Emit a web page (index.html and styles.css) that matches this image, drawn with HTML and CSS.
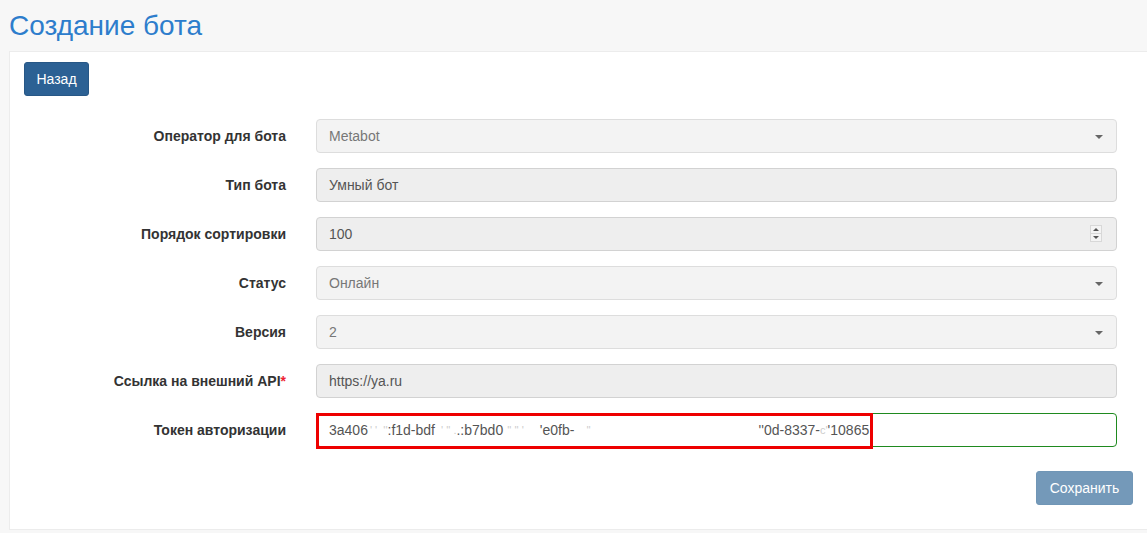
FILE: index.html
```html
<!DOCTYPE html>
<html lang="ru">
<head>
<meta charset="utf-8">
<title>Создание бота</title>
<link rel="stylesheet" href="styles.css">
</head>
<body>
<h1 class="title">Создание бота</h1>
<div class="panel">
  <div class="top"><button class="btn btn-back">Назад</button></div>
  <form class="form">
    <div class="row">
      <label class="label">Оператор для бота</label>
      <div class="field select">Metabot<span class="caret"></span></div>
    </div>
    <div class="row">
      <label class="label">Тип бота</label>
      <div class="field readonly">Умный бот</div>
    </div>
    <div class="row">
      <label class="label">Порядок сортировки</label>
      <div class="field readonly">100<span class="spin"><span class="up"></span><span class="down"></span></span></div>
    </div>
    <div class="row">
      <label class="label">Статус</label>
      <div class="field select">Онлайн<span class="caret"></span></div>
    </div>
    <div class="row">
      <label class="label">Версия</label>
      <div class="field select">2<span class="caret"></span></div>
    </div>
    <div class="row">
      <label class="label">Ссылка на внешний API<span class="req">*</span></label>
      <div class="field readonly">https://ya.ru</div>
    </div>
    <div class="row">
      <label class="label">Токен авторизации</label>
      <div class="field token">
        <span class="t">3a406</span><span class="f s1">' '  ''</span><span class="t g1">:f1d-bdf</span><span class="f s2">' '' .</span><span class="t g2">.:b7bd0</span><span class="f s3">'' '' '</span><span class="t g3">'e0fb-</span><span class="f s4">''</span><span class="t g4">''0d-8337-</span><span class="f s5">c'</span><span class="t g5">'10865</span>
        <span class="redact"></span>
      </div>
    </div>
    <div class="actions"><button type="button" class="btn btn-save">Сохранить</button></div>
  </form>
</div>
</body>
</html>
```
FILE: styles.css
```css
html, body {
  margin: 0;
  padding: 0;
  background: #f7f7f7;
  font-family: "Liberation Sans", Arial, sans-serif;
  font-size: 14px;
  color: #333;
}
body {
  padding: 9px 0 0 9px;
}
.title {
  margin: 0 0 9px 0;
  font-size: 28px;
  line-height: 33px;
  font-weight: normal;
  color: #2d7dcc;
}
.panel {
  background: #fff;
  border: 1px solid #ececec;
  border-right: none;
  padding: 10px 14px 24px 14px;
}
.btn {
  font-family: "Liberation Sans", Arial, sans-serif;
  font-size: 14px;
  color: #fff;
  border: 1px solid transparent;
  border-radius: 3px;
  height: 34px;
  padding: 0 12px;
  cursor: pointer;
  display: block;
}
.btn-back {
  background: #2c6194;
  border-color: #275786;
  width: 65px;
  padding: 0;
}
.form {
  margin: 23px 0 0 0;
  display: flex;
  flex-direction: column;
  gap: 15px;
}
.row {
  display: grid;
  grid-template-columns: 262px 801px;
  column-gap: 30px;
  align-items: center;
}
.label {
  text-align: right;
  font-weight: bold;
  color: #333;
}
.req { color: #e23; font-weight: bold; }
.field {
  position: relative;
  height: 34px;
  box-sizing: border-box;
  border: 1px solid #d2d2d2;
  border-radius: 4px;
  padding: 0 12px;
  display: flex;
  align-items: center;
  color: #555;
  background: #eee;
}
.select {
  background: #f3f3f3;
  border-color: #ddd;
  color: #777;
}
.caret {
  position: absolute;
  right: 13px;
  top: 15px;
  width: 0;
  height: 0;
  border-left: 4px solid transparent;
  border-right: 4px solid transparent;
  border-top: 4px solid #666;
}
.spin {
  position: absolute;
  right: 14px;
  top: 7px;
  width: 12px;
  height: 17px;
  border: 1px solid #d8d8d8;
  box-sizing: border-box;
  display: flex;
  flex-direction: column;
  background: #f4f4f4;
}
.spin .up, .spin .down {
  flex: 1;
  position: relative;
}
.spin .up { border-bottom: 1px solid #d8d8d8; }
.spin .up::after, .spin .down::after {
  content: "";
  position: absolute;
  left: 2px;
  top: 2px;
  border-left: 3px solid transparent;
  border-right: 3px solid transparent;
}
.spin .up::after { border-bottom: 3px solid #555; }
.spin .down::after { border-top: 3px solid #555; }
.token {
  background: #fff;
  border-color: #1f8a1f;
  white-space: pre;
}
.token .t { color: #555; }
.token .f { color: #ccc; font-size: 11px; }
.s1 { margin-left: 2px; }
.g1 { margin-left: 0; }
.s2 { margin-left: 6px; }
.g2 { margin-left: 0; }
.s3 { margin-left: 4px; }
.g3 { margin-left: 16px; }
.s4 { margin-left: 12px; }
.g4 { margin-left: 168px; }
.s5 { margin-left: 0; }
.g5 { margin-left: 0; }
.redact {
  position: absolute;
  left: -1px;
  top: -1px;
  width: 557px;
  height: 36px;
  border: 3px solid #e00;
  box-sizing: border-box;
}
.actions {
  display: flex;
  justify-content: flex-end;
  margin-top: 9px;
}
.btn-save {
  background: #7499b9;
  border-color: #7096b6;
  width: 97px;
  padding: 0;
}
```
